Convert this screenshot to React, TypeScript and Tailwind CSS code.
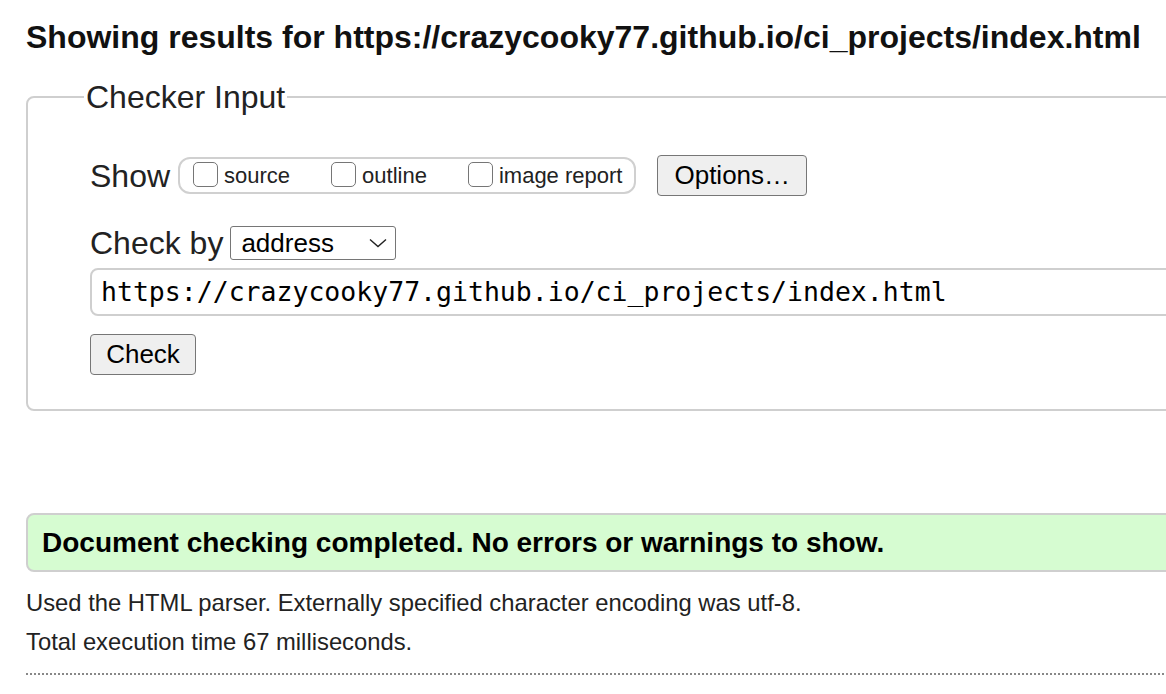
import React from 'react';

const sans = "font-['Liberation_Sans',Arial,Helvetica,sans-serif]";

const Box: React.FC<{ label: string }> = ({ label }) => (
  <label className="flex items-end gap-[6px]">
    <input
      type="checkbox"
      className="appearance-none w-[25px] h-[25px] mb-[2px] border-[1.5px] border-[#767676] rounded-[5px] bg-white"
    />
    <span className="text-[22px] leading-[26px]">{label}</span>
  </label>
);

export default function App() {
  return (
    <div className={`w-[1166px] h-[694px] overflow-hidden bg-white text-[#222] ${sans}`}>
      <div className="pl-[26px] pt-[19px] w-[1240px]">
        {/* Heading */}
        <h2 className="text-[32px] leading-[36px] font-bold text-[#111]">
          Showing results for https://crazycooky77.github.io/ci_projects/index.html
        </h2>

        {/* Checker Input */}
        <fieldset className="mt-[24px] border-2 border-[#cfcfcf] rounded-[8px] pl-[62px] pb-[34px]">
          <legend className="-ml-[6px] px-[2px] text-[32px] leading-[36px]">Checker Input</legend>

          <div className="mt-[40px] flex items-center h-[41px]">
            <span className="text-[32px] leading-[36px] mr-[8px]">Show</span>
            <div className="flex items-center gap-[41px] h-[37px] border-2 border-[#d0d0d0] rounded-[12px] pl-[13px] pr-[12px]">
              <Box label="source" />
              <Box label="outline" />
              <Box label="image report" />
            </div>
            <button className="ml-[21px] h-[41px] px-[16px] bg-[#efefef] border-[1.5px] border-[#767676] rounded-[4px] text-[26px] text-black">
              Options…
            </button>
          </div>

          <div className="mt-[29px] flex items-center h-[36px]">
            <span className="text-[32px] leading-[36px] mr-[7px]">Check by</span>
            <div className="flex items-center justify-between w-[166px] h-[34px] border border-[#767676] rounded-[3px] bg-white pl-[10px] pr-[8px] text-[26px] text-black">
              <span>address</span>
              <svg width="18" height="10" viewBox="0 0 18 10" fill="none">
                <path d="M1 1.5 L9 8.5 L17 1.5" stroke="#222" strokeWidth="1.4" />
              </svg>
            </div>
          </div>

          <div className="mt-[7px] h-[48px] border-2 border-[#cfcfcf] rounded-[8px] flex items-center pl-[9px] font-['DejaVu_Sans_Mono',Menlo,monospace] text-[26.5px] text-black">
            https://crazycooky77.github.io/ci_projects/index.html
          </div>

          <button className="mt-[18px] h-[41px] w-[106px] bg-[#efefef] border-[1.5px] border-[#767676] rounded-[4px] text-[26px] text-black">
            Check
          </button>
        </fieldset>

        {/* Result */}
        <div className="mt-[102px] h-[59px] flex items-center pl-[14px] bg-[#d6fcd1] border-2 border-[#cfcfcf] rounded-[8px]">
          <span className="text-[28px] leading-[32px] font-bold text-black">
            Document checking completed. No errors or warnings to show.
          </span>
        </div>

        <p className="mt-[19px] text-[23.8px] leading-[24px]">
          Used the HTML parser. Externally specified character encoding was utf-8.
        </p>
        <p className="mt-[15px] text-[23.8px] leading-[24px]">Total execution time 67 milliseconds.</p>

        <div className="mt-[19px] border-t-2 border-dotted border-[#888]" />
      </div>
    </div>
  );
}
